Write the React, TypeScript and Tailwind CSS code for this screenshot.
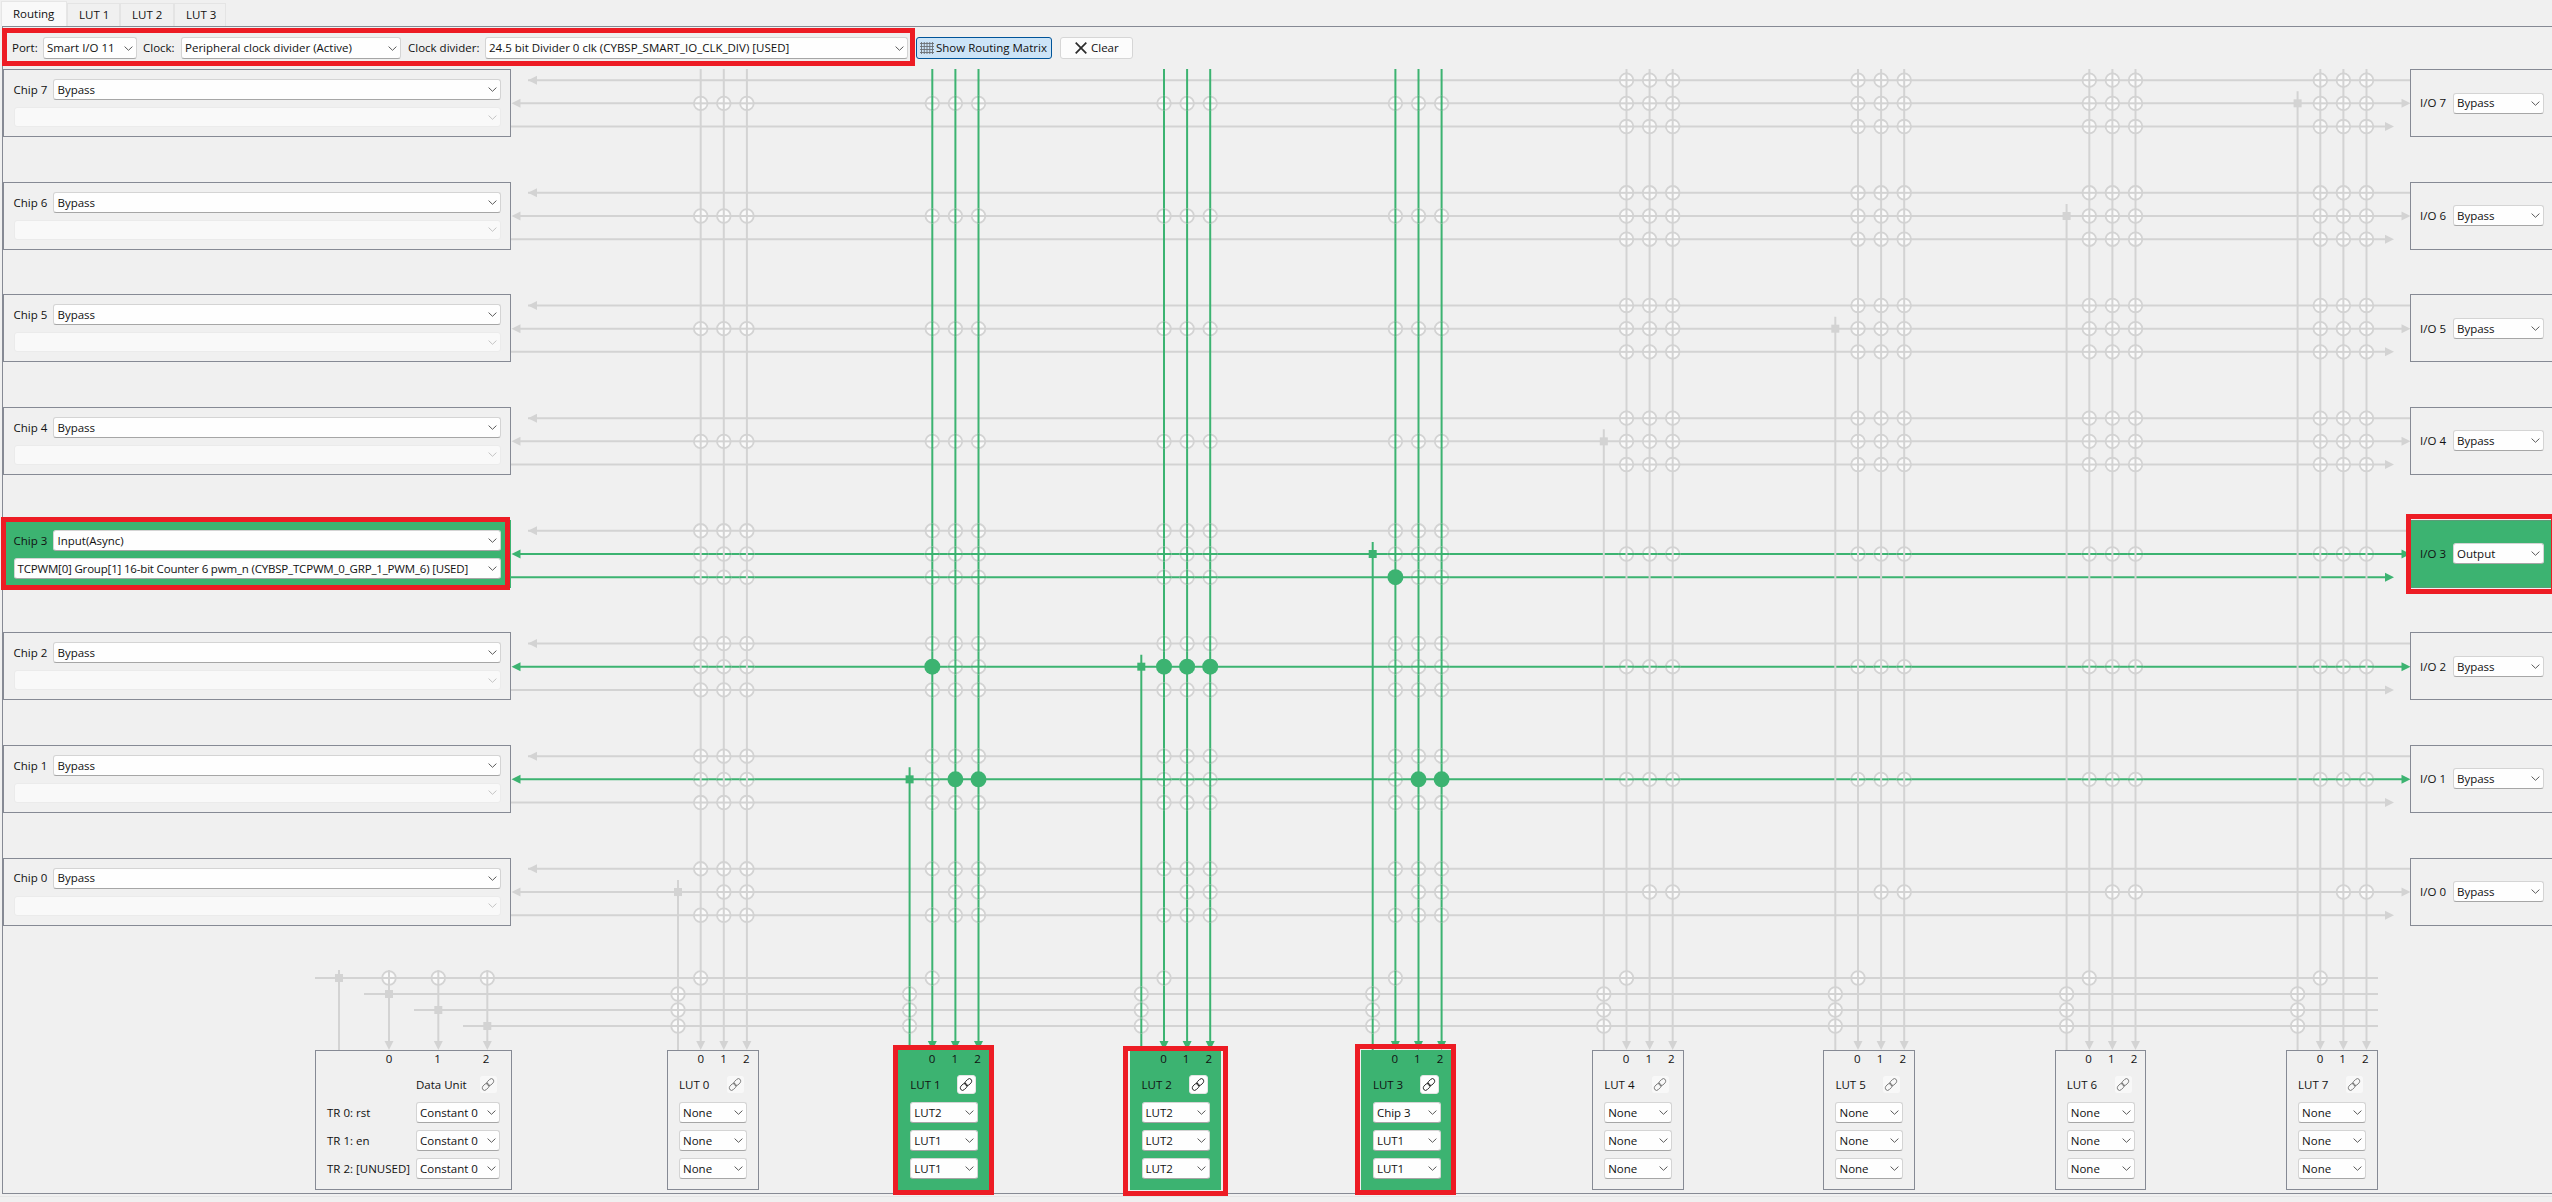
import React from "react";

const GRAY = "#d3d3d3";
const GREEN = "#3cb371";
const RED_FRAME = "absolute border-[5px] border-[#ed1c24] pointer-events-none z-20";

const GROUP_X = [700.7, 932.3, 1164, 1395.4, 1626.5, 1858, 2089.3, 2320.3];
const mid = (r: number) => 103.33 + 112.67 * (7 - r);
const x0 = (g: number) => GROUP_X[g];
const colX = (g: number, c: number) => x0(g) + 23.1 * c;
const outX = (g: number) => x0(g) - 22.7;

function Arrow({ x, y, dir, color }: { x: number; y: number; dir: "l" | "r" | "d"; color: string }) {
  const pts =
    dir === "l"
      ? `${x},${y} ${x + 9},${y - 4.5} ${x + 9},${y + 4.5}`
      : dir === "r"
      ? `${x},${y} ${x - 9},${y - 4.5} ${x - 9},${y + 4.5}`
      : `${x},${y} ${x - 4.5},${y - 9} ${x + 4.5},${y - 9}`;
  return <polygon points={pts} fill={color} />;
}

function Node({ x, y, h, v }: { x: number; y: number; h: string; v: string }) {
  return (
    <g>
      <circle cx={x} cy={y} r={6.8} fill="#fafafa" stroke={GRAY} strokeWidth={1.8} />
      <line x1={x - 7.5} y1={y} x2={x + 7.5} y2={y} stroke={h} strokeWidth={2} />
      <line x1={x} y1={y - 7.5} x2={x} y2={y + 7.5} stroke={v} strokeWidth={2} />
    </g>
  );
}

function Wires() {
  const rows = [0, 1, 2, 3, 4, 5, 6, 7];
  const groups = rows;
  const cols = [0, 1, 2];
  const greenH = (r: number, w: number) => (w === 0 && (r === 1 || r === 2 || r === 3)) || (r === 3 && w === 1);
  const greenV = (g: number) => g === 1 || g === 2 || g === 3;
  const wireY = (r: number, w: number) => mid(r) + (w === -1 ? -23.2 : w === 1 ? 23.2 : 0);
  const dots = [
    [1, 0, 2, 0],
    [1, 1, 1, 0],
    [1, 2, 1, 0],
    [2, 0, 2, 0],
    [2, 1, 2, 0],
    [2, 2, 2, 0],
    [3, 0, 3, 1],
    [3, 1, 1, 0],
    [3, 2, 1, 0],
  ];
  const isDot = (g: number, c: number, r: number, w: number) =>
    dots.some((d) => d[0] === g && d[1] === c && d[2] === r && d[3] === w);
  const hasNode = (g: number, c: number, r: number, w: number) => {
    if (r === 0 && w === 0 && c === 0) return false;
    if (g < 4) return r < 4 || w === 0;
    return r >= 4 || w === 0;
  };
  const du = [389, 438.3, 487.3];
  const busY = [978, 994, 1010, 1026];
  const busStart = [315, 364, 414, 463];
  return (
    <svg width="2552" height="1202" className="absolute left-0 top-0 z-0">
      {rows.map((r) => (
        <g key={r}>
          <line x1={528} y1={wireY(r, -1)} x2={2410} y2={wireY(r, -1)} stroke={GRAY} strokeWidth={2} />
          <line x1={516} y1={mid(r)} x2={2404} y2={mid(r)} stroke={greenH(r, 0) ? GREEN : GRAY} strokeWidth={2} />
          <line x1={511} y1={wireY(r, 1)} x2={2388} y2={wireY(r, 1)} stroke={greenH(r, 1) ? GREEN : GRAY} strokeWidth={2} />
          <Arrow x={528} y={wireY(r, -1)} dir="l" color={GRAY} />
          <Arrow x={511.5} y={mid(r)} dir="l" color={greenH(r, 0) ? GREEN : GRAY} />
          <Arrow x={2410.5} y={mid(r)} dir="r" color={greenH(r, 0) ? GREEN : GRAY} />
          <Arrow x={2394} y={wireY(r, 1)} dir="r" color={greenH(r, 1) ? GREEN : GRAY} />
        </g>
      ))}
      {busY.map((y, i) => (
        <line key={y} x1={busStart[i]} y1={y} x2={2378} y2={y} stroke={GRAY} strokeWidth={2} />
      ))}
      {groups.map((g) => {
        const color = greenV(g) ? GREEN : GRAY;
        return (
          <g key={g}>
            <line x1={outX(g)} y1={mid(g) - 12} x2={outX(g)} y2={1050} stroke={color} strokeWidth={2} />
            <rect x={outX(g) - 4} y={mid(g) - 4} width={8} height={8} fill={color} />
            {cols.map((c) => (
              <g key={c}>
                <line x1={colX(g, c)} y1={69} x2={colX(g, c)} y2={1043} stroke={color} strokeWidth={2} />
                <Arrow x={colX(g, c)} y={1050} dir="d" color={color} />
              </g>
            ))}
          </g>
        );
      })}
      {groups.map((g) =>
        cols.map((c) =>
          rows.map((r) =>
            [-1, 0, 1].map((w) => {
              const hc = greenH(r, w) ? GREEN : GRAY;
              const vc = greenV(g) ? GREEN : GRAY;
              if (isDot(g, c, r, w)) return <circle key={`${g}${c}${r}${w}`} cx={colX(g, c)} cy={wireY(r, w)} r={8} fill={GREEN} />;
              if (!hasNode(g, c, r, w)) return null;
              return <Node key={`${g}${c}${r}${w}`} x={colX(g, c)} y={wireY(r, w)} h={hc} v={vc} />;
            })
          )
        )
      )}
      {groups.map((g) => (
        <g key={g}>
          <Node x={x0(g)} y={978} h={GRAY} v={greenV(g) ? GREEN : GRAY} />
          {[994, 1010, 1026].map((y) => (
            <Node key={y} x={outX(g)} y={y} h={GRAY} v={greenV(g) ? GREEN : GRAY} />
          ))}
        </g>
      ))}
      <line x1={339} y1={970} x2={339} y2={1050} stroke={GRAY} strokeWidth={2} />
      <rect x={335} y={974} width={8} height={8} fill={GRAY} />
      {du.map((x, i) => (
        <g key={x}>
          <line x1={x} y1={970} x2={x} y2={1043} stroke={GRAY} strokeWidth={2} />
          <Arrow x={x} y={1050} dir="d" color={GRAY} />
          <Node x={x} y={978} h={GRAY} v={GRAY} />
          <rect x={x - 4} y={busY[i + 1] - 4} width={8} height={8} fill={GRAY} />
        </g>
      ))}
    </svg>
  );
}

function Chevron({ light }: { light?: boolean }) {
  return (
    <svg width="9" height="5" viewBox="0 0 9 5" className="shrink-0">
      <path d="M0.6 0.6 L4.5 4.3 L8.4 0.6" fill="none" stroke={light ? "#c4c4c4" : "#5a5a5a"} strokeWidth="1" />
    </svg>
  );
}

function Select({ value, className, disabled }: { value?: string; className: string; disabled?: boolean }) {
  return (
    <div
      className={`flex items-center justify-between pl-[3px] pr-[3px] rounded-[3px] border whitespace-nowrap overflow-hidden ${
        disabled
          ? "bg-[#f9f9f9] border-[#ebebeb]"
          : "bg-[#fefefe] border-[#d4d4d4] border-b-[#a6a6a6]"
      } ${className}`}
    >
      <span>{value}</span>
      <Chevron light={disabled} />
    </div>
  );
}

function LinkIcon({ dark }: { dark?: boolean }) {
  const stroke = dark ? "#222" : "#777";
  return (
    <svg width="13" height="13" viewBox="0 0 14 14" className="-translate-x-[0.5px]">
      <g transform="rotate(-45 7 7)" fill="none" stroke={stroke} strokeWidth="1">
        <rect x="-0.8" y="4.4" width="8.6" height="5.2" rx="2.6" />
        <rect x="6.2" y="4.4" width="8.6" height="5.2" rx="2.6" />
      </g>
    </svg>
  );
}

function LinkButton({ on }: { on?: boolean }) {
  return (
    <div
      className={`w-[19px] h-[19px] rounded-[3px] flex items-center justify-center border ${
        on ? "bg-[#fefefe] border-[#e4e4e4]" : "bg-[#f8f8f8] border-[#f0f0f0]"
      }`}
    >
      <LinkIcon dark={on} />
    </div>
  );
}

function ChipBox({ n, on, mode, source }: { n: number; on?: boolean; mode: string; source?: string }) {
  return (
    <div
      className={`relative w-[508px] h-[68px] border px-[9.5px] pt-[9px] flex flex-col gap-[7px] ${
        on ? "bg-[#3cb371] border-[#3cb371]" : "bg-[#f0f0f0] border-[#868a94]"
      }`}
    >
      <div className="flex items-center">
        <span className="w-[40px]">Chip {n}</span>
        <Select value={mode} className="w-[447.5px] h-[21px]" />
      </div>
      {on ? (
        <Select value={source} className="w-[487.5px] h-[21px] tracking-[-0.18px]" />
      ) : (
        <Select disabled className="w-[487.5px] h-[20px]" />
      )}
      {on && <div className={`${RED_FRAME} -left-[3px] right-0 -top-[4px] -bottom-[3px]`} />}
    </div>
  );
}

function IoBox({ n, on, mode }: { n: number; on?: boolean; mode: string }) {
  return (
    <div
      className={`relative w-[142px] h-[68px] border border-r-0 pl-[9px] flex items-center ${
        on ? "bg-[#3cb371] border-[#5c9c78]" : "bg-[#f0f0f0] border-[#868a94]"
      }`}
    >
      <span className="w-[33px]">I/O {n}</span>
      <Select value={mode} className="w-[91px] h-[21px]" />
      {on && <div className={`${RED_FRAME} -left-[5px] -right-[4px] -top-[7px] -bottom-[7px]`} />}
    </div>
  );
}

function LutBox({ n, values, frame }: { n: number; values: string[]; frame?: string }) {
  const on = !!frame;
  return (
    <div
      className={`relative w-[91.5px] h-[140px] border flex flex-col ${
        on ? "bg-[#3cb371] border-[#3cb371]" : "bg-[#f0f0f0] border-[#868a94]"
      }`}
    >
      <div className="flex h-[16px] items-center pl-[21.5px]">
        {[0, 1, 2].map((i) => (
          <span key={i} className="w-[23.2px] text-center">
            {i}
          </span>
        ))}
      </div>
      <div className="flex items-center justify-between w-[68px] mx-[11px] mt-[8px] pr-[2px]">
        <span>LUT {n}</span>
        <LinkButton on={on} />
      </div>
      <div className="flex flex-col gap-[7px] mt-[8px] mx-[11px]">
        {values.map((v, i) => (
          <Select key={i} value={v} className="w-[68px] h-[21px]" />
        ))}
      </div>
      {frame && <div className={`${RED_FRAME} ${frame}`} />}
    </div>
  );
}

function DataUnit() {
  const rows = [
    ["TR 0: rst", "Constant 0"],
    ["TR 1: en", "Constant 0"],
    ["TR 2: [UNUSED]", "Constant 0"],
  ];
  return (
    <div className="w-[197px] h-[140px] border border-[#868a94] bg-[#f0f0f0] flex flex-col shrink-0 mr-[155px]">
      <div className="flex h-[16px] items-center pl-[48.7px]">
        {[0, 1, 2].map((i) => (
          <span key={i} className="w-[48.5px] text-center">
            {i}
          </span>
        ))}
      </div>
      <div className="flex items-center justify-between ml-[100px] w-[82px] mt-[8px]">
        <span>Data Unit</span>
        <LinkButton />
      </div>
      <div className="flex flex-col gap-[7px] mt-[8px] pl-[11px]">
        {rows.map((r) => (
          <div key={r[0]} className="flex items-center">
            <span className="w-[89px]">{r[0]}</span>
            <Select value={r[1]} className="w-[84px] h-[21px]" />
          </div>
        ))}
      </div>
    </div>
  );
}

function Tab({ label, active, className }: { label: string; active?: boolean; className: string }) {
  return (
    <div
      className={`flex items-center border border-b-0 ${
        active ? "bg-[#f9f9f9] border-[#e6e6e6] h-[25px]" : "bg-[#f0f0f0] border-[#e4e4e4] h-[23px]"
      } ${className}`}
    >
      {label}
    </div>
  );
}

export default function App() {
  return (
    <div className="relative w-[2552px] h-[1202px] overflow-hidden bg-[#f0f0f0] text-[#111] text-[11.5px] font-['Open_Sans',sans-serif]">
      <Wires />
      <div className="relative z-10">
        <div className="flex items-end h-[26px] pl-[1px]">
          <Tab label="Routing" active className="w-[66px] pl-[11px]" />
          <Tab label="LUT 1" className="w-[53px] pl-[11px]" />
          <Tab label="LUT 2" className="w-[54px] pl-[11px]" />
          <Tab label="LUT 3" className="w-[52px] pl-[11px]" />
        </div>
        <div className="ml-[2px] h-[1168px] border-t border-l border-b border-[#868a94]">
          <div className="relative flex items-center h-[22px] mt-[10px] mb-[10px] pl-[9px]">
            <span className="w-[31px]">Port:</span>
            <Select value="Smart I/O 11" className="w-[94px] h-[22px]" />
            <span className="w-[38px] ml-[6px]">Clock:</span>
            <Select value="Peripheral clock divider (Active)" className="w-[220px] h-[22px]" />
            <span className="w-[77px] ml-[7px]">Clock divider:</span>
            <Select value="24.5 bit Divider 0 clk (CYBSP_SMART_IO_CLK_DIV) [USED]" className="w-[423px] h-[22px]" />
            <button className="flex items-center gap-[2px] w-[136px] h-[22px] ml-[8px] pl-[3px] rounded-[3px] border border-[#005499] bg-[#cce4f7]">
              <svg width="14" height="12" viewBox="0 0 14 12" className="shrink-0">
                <path
                  d="M1.5 0V12M4.25 0V12M7 0V12M9.75 0V12M12.5 0V12M0 1.5H14M0 4.5H14M0 7.5H14M0 10.5H14"
                  stroke="#6b6f74"
                  strokeWidth="0.9"
                  fill="none"
                />
              </svg>
              <span>Show Routing Matrix</span>
            </button>
            <button className="flex items-center gap-[4px] w-[73px] h-[22px] ml-[8px] pl-[14px] rounded-[3px] border border-[#d6d6d6] bg-[#fcfcfc]">
              <svg width="12" height="12" viewBox="0 0 12 12" className="shrink-0">
                <path d="M0.7 0.7L11.3 11.3M11.3 0.7L0.7 11.3" stroke="#2b2b2b" strokeWidth="1.7" fill="none" />
              </svg>
              <span>Clear</span>
            </button>
            <div className={`${RED_FRAME} -left-[1px] w-[913px] -top-[9px] h-[38px]`} />
          </div>
          <div className="flex justify-between">
            <div className="flex flex-col gap-[44.67px]">
              <ChipBox n={7} mode="Bypass" />
              <ChipBox n={6} mode="Bypass" />
              <ChipBox n={5} mode="Bypass" />
              <ChipBox n={4} mode="Bypass" />
              <ChipBox
                n={3}
                on
                mode="Input(Async)"
                source="TCPWM[0] Group[1] 16-bit Counter 6 pwm_n (CYBSP_TCPWM_0_GRP_1_PWM_6) [USED]"
              />
              <ChipBox n={2} mode="Bypass" />
              <ChipBox n={1} mode="Bypass" />
              <ChipBox n={0} mode="Bypass" />
            </div>
            <div className="flex flex-col gap-[44.67px]">
              <IoBox n={7} mode="Bypass" />
              <IoBox n={6} mode="Bypass" />
              <IoBox n={5} mode="Bypass" />
              <IoBox n={4} mode="Bypass" />
              <IoBox n={3} on mode="Output" />
              <IoBox n={2} mode="Bypass" />
              <IoBox n={1} mode="Bypass" />
              <IoBox n={0} mode="Bypass" />
            </div>
          </div>
          <div className="flex mt-[124.33px] ml-[312px]">
            <DataUnit />
            <div className="flex gap-[139.8px]">
              <LutBox n={0} values={["None", "None", "None"]} />
              <LutBox
                n={1}
                values={["LUT2", "LUT1", "LUT1"]}
                frame="-left-[6.3px] -right-[5.2px] -top-[6px] -bottom-[6px]"
              />
              <LutBox
                n={2}
                values={["LUT2", "LUT2", "LUT2"]}
                frame="-left-[7.6px] -right-[8px] -top-[5px] -bottom-[7px]"
              />
              <LutBox
                n={3}
                values={["Chip 3", "LUT1", "LUT1"]}
                frame="-left-[7px] -right-[4.6px] -top-[7px] -bottom-[6px]"
              />
              <LutBox n={4} values={["None", "None", "None"]} />
              <LutBox n={5} values={["None", "None", "None"]} />
              <LutBox n={6} values={["None", "None", "None"]} />
              <LutBox n={7} values={["None", "None", "None"]} />
            </div>
          </div>
        </div>
        <div className="h-px mt-[2px] bg-[#e6e6e6]" />
      </div>
    </div>
  );
}
